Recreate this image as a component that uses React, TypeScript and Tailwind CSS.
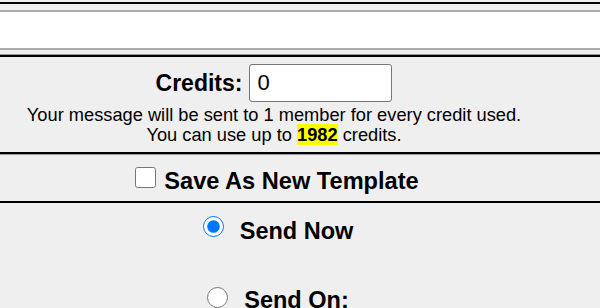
import React from "react";

export default function App() {
  return (
    <div className="w-[600px] h-[308px] overflow-hidden bg-[#efefef] text-black font-['Liberation_Sans',Arial,sans-serif]">
      {/* Message box row */}
      <div className="mt-[2px] border-t-2 border-black pt-[6px] pb-[4px] border-b border-b-[#9a9a9a]">
        <div className="h-[40px] border-y-2 border-[#aaaaaa] bg-white" />
      </div>

      {/* Credits */}
      <div className="h-[97px] border-t-2 border-black">
        <div className="w-[548px] pt-[7px]">
          <div className="flex items-center justify-center gap-[7px]">
            <span className="text-[23px] font-bold leading-[26px]">Credits:</span>
            <input
              type="text"
              defaultValue="0"
              className="w-[143px] h-[38px] border border-[#767676] rounded-[3px] bg-white px-[7px] text-[22px] leading-[26px] outline-none"
            />
          </div>
          <div className="mt-[3px] text-center text-[18.25px] leading-[20px]">
            <p>Your message will be sent to 1 member for every credit used.</p>
            <p>
              You can use up to{" "}
              <span className="bg-[#ffff00] font-bold">1982</span> credits.
            </p>
          </div>
        </div>
      </div>

      {/* Template */}
      <div className="h-[51px] border-t-2 border-black">
        <div className="h-full border-t border-[#9a9a9a] border-b-2 border-b-black">
          <div className="w-[548px] pl-[6px] pt-[12px] flex items-start justify-center gap-[8px]">
            <input type="checkbox" className="w-[21px] h-[21px] shrink-0" readOnly />
            <span className="mt-[1px] text-[23.6px] font-bold leading-[26px]">Save As New Template</span>
          </div>
        </div>
      </div>

      {/* Send options */}
      <div className="w-[548px] pt-[13px] flex flex-col gap-[43px]">
        <label className="pl-[8px] flex items-start justify-center gap-[16px]">
          <input type="radio" name="send" defaultChecked className="w-[21px] h-[21px] shrink-0" />
          <span className="mt-[2px] text-[23.5px] font-bold leading-[26px]">Send Now</span>
        </label>
        <label className="pl-[8px] flex items-start justify-center gap-[16px]">
          <input type="radio" name="send" className="w-[21px] h-[21px] shrink-0" />
          <span className="text-[23.5px] font-bold leading-[26px]">Send On:</span>
        </label>
      </div>
    </div>
  );
}
